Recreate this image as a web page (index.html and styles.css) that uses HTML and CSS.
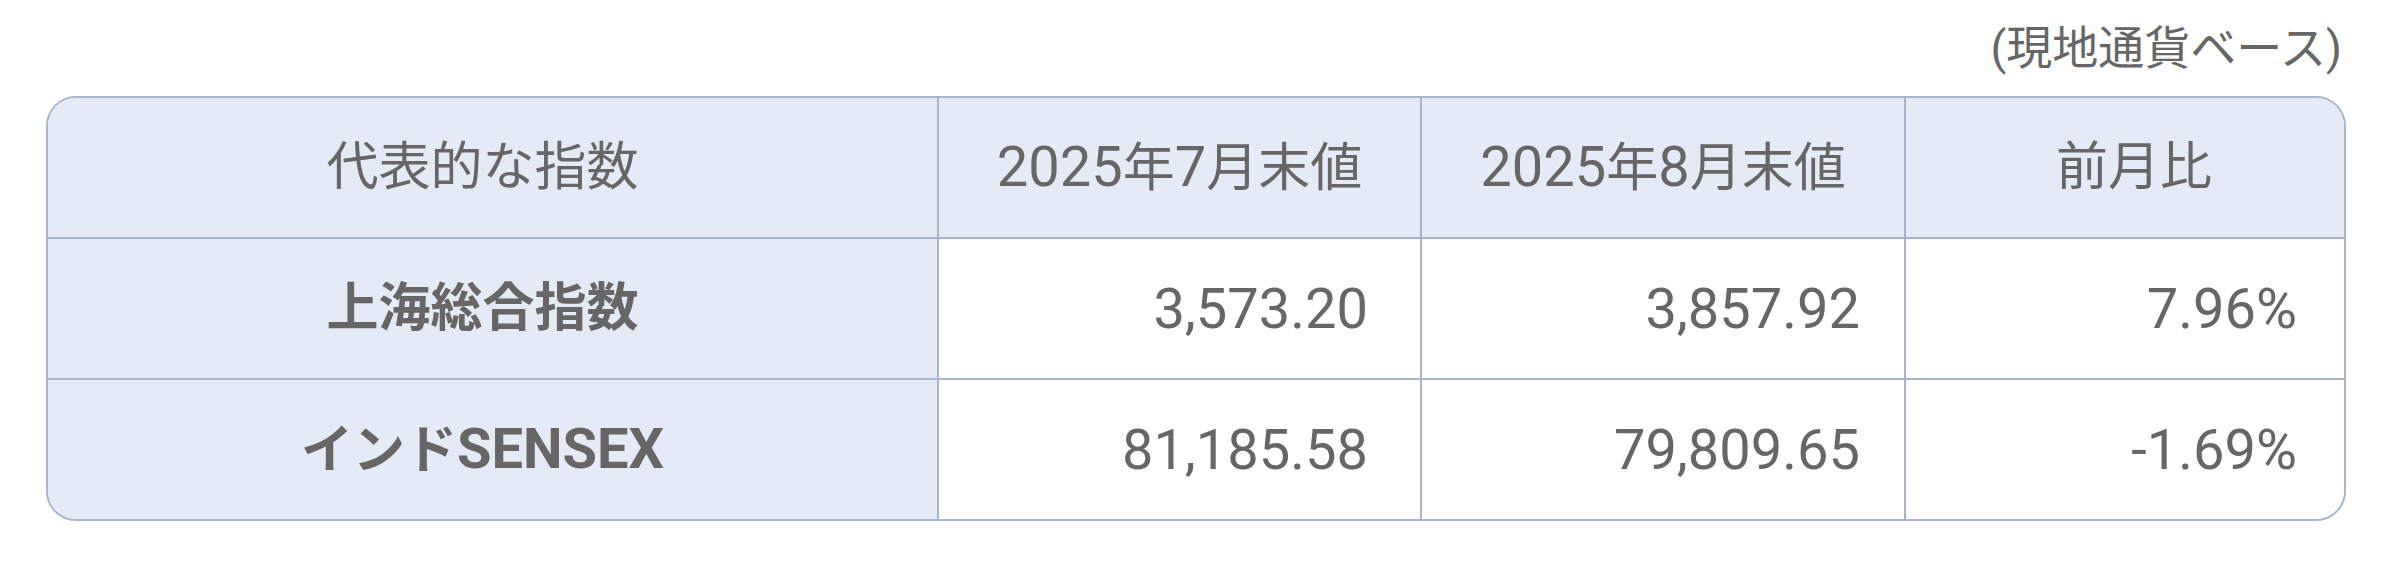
FILE: index.html
```html
<!DOCTYPE html>
<html lang="ja">
<head>
<meta charset="utf-8">
<link rel="stylesheet" href="styles.css">
</head>
<body>
<div class="page">
  <div class="note">(現地通貨ベース)</div>
  <div class="frame">
    <table class="idx">
      <colgroup>
        <col class="c1"><col class="c2"><col class="c3"><col class="c4">
      </colgroup>
      <thead>
        <tr>
          <th class="name">代表的な指数</th>
          <th><span class="lat">2025</span>年<span class="lat">7</span>月末値</th>
          <th><span class="lat">2025</span>年<span class="lat">8</span>月末値</th>
          <th class="last">前月比</th>
        </tr>
      </thead>
      <tbody>
        <tr><th class="name">上海総合指数</th><td class="v2">3,573.20</td><td class="v3">3,857.92</td><td class="v4">7.96%</td></tr>
        <tr><th class="name">インド<span class="lat">SENSEX</span></th><td class="v2">81,185.58</td><td class="v3">79,809.65</td><td class="v4">-1.69%</td></tr>
      </tbody>
    </table>
  </div>
</div>
</body>
</html>
```
FILE: styles.css
```css
html, body { margin: 0; padding: 0; background: #ffffff; }
body {
  font-family: Roboto, "Noto Sans CJK JP", sans-serif;
  color: #666666;
}
.page {
  width: 2300px;
  margin-left: 46px;
  display: flex;
  flex-direction: column;
}
.note {
  height: 96px;
  box-sizing: border-box;
  padding-top: 19px;
  padding-right: 4px;
  text-align: right;
  font-size: 46px;
  line-height: 58px;
}
.frame {
  border: 2px solid #a7b4cb;
  border-radius: 30px;
  overflow: hidden;
  background: #ffffff;
}
.idx {
  width: 100%;
  border-collapse: collapse;
  table-layout: fixed;
}
.c1 { width: 890px; }
.c2 { width: 483px; }
.c3 { width: 484px; }
.c4 { width: auto; }
.idx th, .idx td {
  border: 2px solid #a7b4cb;
  font-size: 52px;
  font-weight: 400;
  line-height: 60px;
  padding: 0;
}
.lat { font-size: 56px; }
.idx thead th { border-top: none; }
.idx tbody tr:last-child th, .idx tbody tr:last-child td { border-bottom: none; }
.idx th:first-child { border-left: none; }
.idx td:last-child, .idx th:last-child { border-right: none; }
.idx thead th {
  background: #e4eaf6;
  height: 139px;
  text-align: center;
}
.idx th.name { padding-right: 20px; }
.idx th.last { padding-left: 18px; }
.idx tbody th.name {
  background: #e4eaf6;
  font-weight: 700;
  text-align: center;
  height: 139px;
}
.idx tbody td {
  text-align: right;
  font-size: 56px;
  background: #ffffff;
}
.idx td.v2 { padding-right: 52px; }
.idx td.v3 { padding-right: 44px; }
.idx td.v4 { padding-right: 47px; }
```
